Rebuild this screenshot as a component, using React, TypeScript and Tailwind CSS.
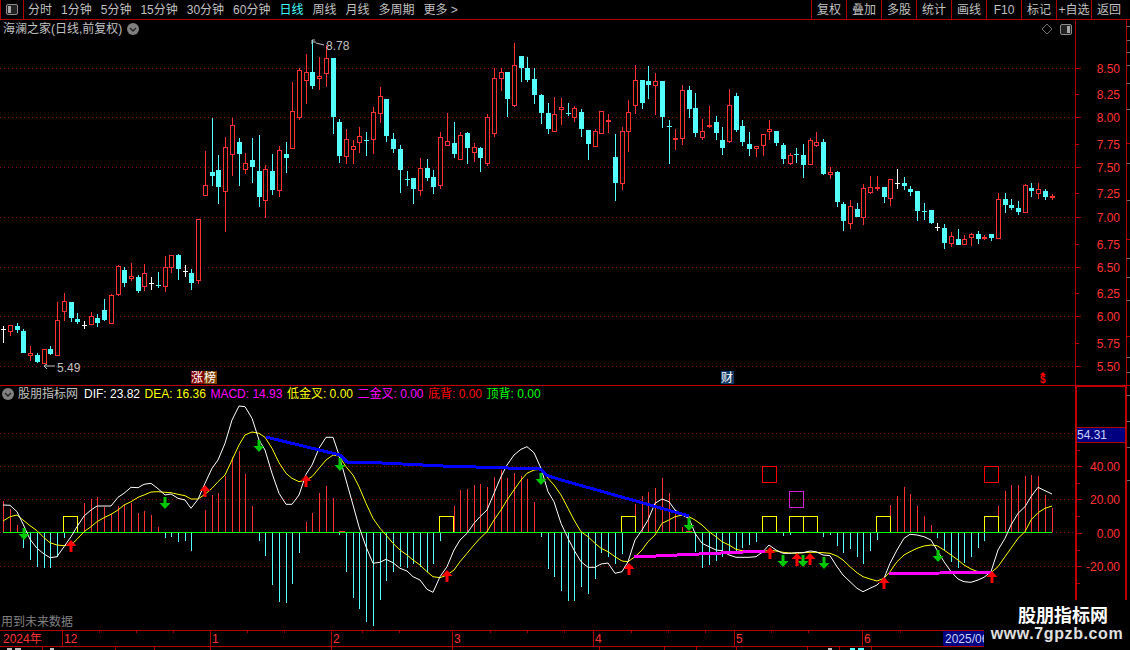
import React from "react";

type Kind = "R" | "C" | "W" | "X" | "F";
type Candle = [Kind, number, number, number, number];

const RED = "#ff3232";
const CYAN = "#54ffff";
const LINE = "#b00000";
const GRID = "#900c0c";

// kind, body top, body bottom, wick top, wick bottom (page pixels)
const candles: Candle[] = [
  ["W",329,329,326,343],["R",325,332,325,336],["C",326,330,323,333],["C",331,353,329,353],["R",353,356,346,361],
  ["C",355,362,353,363],["R",349,364,349,364],["C",349,354,346,355],["R",320,356,302,356],["R",301,312,293,321],
  ["C",302,318,302,322],["C",319,322,313,324],["W",325,325,321,329],["R",316,325,312,325],["C",318,323,314,327],
  ["C",310,320,299,321],["R",295,324,294,324],["R",266,295,265,296],["C",270,283,267,287],["R",276,279,263,281],
  ["C",277,291,275,293],["R",273,287,264,291],["W",283,283,277,290],["X",285,285,272,288],["R",267,287,256,292],
  ["R",255,268,255,273],["C",255,269,254,280],["W",271,271,265,277],["C",273,283,269,290],["R",219,281,219,284],
  ["R",185,196,151,196],["C",172,176,118,186],["C",170,187,155,204],["R",147,192,137,232],["R",125,155,118,176],
  ["C",142,154,138,186],["R",163,170,153,174],["C",160,167,138,183],["C",171,197,135,207],["R",169,201,165,218],
  ["C",171,190,154,195],["R",150,191,146,197],["C",154,158,142,173],["R",111,149,82,149],["R",70,118,68,120],
  ["R",72,81,54,104],["C",72,86,40,89],["R",76,79,57,90],["R",58,74,45,87],["C",58,117,58,134],
  ["C",122,156,119,163],["R",139,157,129,164],["R",146,150,140,164],["R",136,143,127,153],["X",140,140,132,156],
  ["R",112,140,107,154],["R",96,114,87,123],["C",99,136,99,142],["C",139,149,133,153],["C",149,170,145,193],
  ["X",179,179,171,186],["C",178,189,178,204],["R",168,191,158,196],["C",168,178,159,181],["C",177,187,170,194],
  ["R",137,186,132,189],["R",141,146,113,146],["C",143,154,122,158],["R",135,160,132,160],["C",133,148,132,164],
  ["R",147,153,143,162],["C",148,158,147,172],["R",117,164,114,166],["R",78,134,68,137],["R",72,79,68,91],
  ["C",72,99,72,117],["R",65,106,43,107],["C",56,68,56,82],["C",68,80,57,82],["C",79,95,68,104],
  ["C",95,113,94,124],["C",113,129,103,134],["R",114,132,97,132],["R",107,110,98,125],["X",113,113,103,116],
  ["R",108,118,106,122],["C",112,129,109,137],["C",130,144,130,160],["R",131,147,129,147],["R",111,134,111,134],
  ["F",121,121,114,133],["C",157,183,134,201],["R",131,184,127,190],["R",112,132,100,152],["R",80,106,65,114],
  ["C",80,103,80,109],["C",81,85,66,99],["R",81,86,73,115],["C",81,117,81,128],["X",126,126,120,164],
  ["F",139,139,129,150],["R",90,139,85,145],["C",90,109,86,118],["C",108,133,93,137],["R",131,138,119,140],
  ["F",126,126,106,128],["C",122,133,116,140],["C",140,148,127,155],["R",105,142,89,143],["C",96,130,93,132],
  ["C",126,142,120,146],["C",144,149,132,156],["R",146,149,146,157],["R",134,146,134,156],["R",129,132,120,140],
  ["C",131,143,131,146],["C",145,159,143,164],["R",155,164,153,165],["X",154,154,148,163],["C",155,165,144,178],
  ["R",140,165,138,165],["R",142,146,132,147],["C",142,174,139,175],["R",172,175,167,179],["C",172,202,171,207],
  ["C",204,221,202,231],["R",206,224,200,229],["C",209,217,203,217],["R",188,218,184,225],["R",187,193,176,194],
  ["F",188,188,176,191],["C",187,197,187,203],["R",179,199,179,206],["W",183,183,169,189],["C",183,186,177,190],
  ["C",189,192,186,196],["C",191,211,191,221],["X",211,211,203,220],["C",210,223,210,224],["W",227,227,223,231],
  ["C",228,243,224,249],["R",236,244,232,247],["C",239,245,229,245],["R",239,245,235,245],["R",234,238,233,246],
  ["C",234,239,231,244],["F",238,238,235,240],["C",234,238,234,241],["R",199,239,193,239],["C",199,205,193,213],
  ["C",205,208,199,210],["C",208,212,201,215],["R",185,213,184,213],["C",188,191,183,197],["R",189,194,183,199],
  ["C",191,197,189,200],["F",197,197,194,200],
];

// macd bar height above (+) or below (-) the zero line
const macd = [
  31,23,7,-15,-27,-34,-35,-35,-24,-5,0,0,29,33,35,25,18,26,27,29,19,21,17,5,-5,-4,-9,-8,-18,0,22,37,39,56,75,81,58,26,-8,-23,
  -52,-69,-70,-51,-20,10,19,39,46,34,-2,-39,-65,-76,-89,-93,-67,-48,-39,-34,-35,-31,-34,-39,-31,-8,0,26,42,43,47,48,45,55,62,54,59,56,53,30,
  -4,-36,-44,-58,-68,-68,-54,-61,-46,-20,-24,-31,-21,0,28,36,40,44,54,39,22,5,0,-19,-35,-32,-28,-24,-19,-20,-15,-12,-9,0,0,0,-3,-2,0,0,
  0,0,-4,-2,-13,-20,-16,-24,-31,-18,-7,0,27,36,45,38,26,16,7,-5,-18,-29,-35,-30,-24,-15,-8,0,26,41,47,47,56,57,56,37,24,
];

const difY = [
  375,376,395,432,478,505,522,533,530,500,470,440,408,390,378,378,378,352,340,322,323,313,310,326,345,342,355,360,385,358,
  310,265,240,190,120,78,80,115,180,210,280,340,373,373,345,283,255,205,172,172,225,300,375,440,500,550,547,538,548,565,
  573,590,600,628,637,590,560,510,480,460,430,410,390,340,290,255,225,208,200,218,265,335,365,430,
  475,510,545,562,562,552,549,580,575,545,480,450,420,370,357,365,390,405,415,460,490,500,510,512,525,532,532,532,530,515,
  495,510,520,520,518,518,513,515,525,527,560,585,605,625,635,625,615,595,550,510,475,463,465,470,480,510,545,575,597,605,
  607,600,592,575,510,475,435,400,380,350,322,332,342,
];

const deaY = [
  423,410,405,420,437,452,473,488,495,497,495,478,455,440,425,413,403,390,375,365,352,345,336,335,337,338,343,347,357,357,
  343,325,305,285,240,195,165,156,160,172,205,248,280,295,305,300,290,265,240,225,228,260,285,320,370,415,445,465,490,510,
  525,540,555,575,590,593,585,570,545,520,495,475,455,420,390,360,330,300,280,270,268,295,315,345,
  385,420,455,470,490,505,515,530,543,545,530,510,485,465,430,420,410,405,410,420,435,455,470,485,495,508,512,512,515,515,
  510,513,517,519,520,518,517,517,518,520,528,540,560,578,590,597,603,595,575,545,525,515,505,498,495,497,510,525,540,555,
  567,575,578,578,560,530,505,475,455,420,398,385,378,
];

const candleX = (i: number) => Math.round(3.3 + 6.72 * i);
const toPoints = (ys: number[]) =>
  ys.map((v, i) => `${candleX(i)},${(380 + v / 3).toFixed(1)}`).join(" ");

const greenArrows = [
  [24,528,540],[165,497,509],[259,440,452],[340,458,471],[541,473,485],
  [689,518,531],[783,555,567],[803,555,567],[824,557,569],[938,550,562],
];
const redArrows = [
  [71,540,552],[205,485,497],[306,475,487],[447,570,582],[629,563,575],
  [770,547,559],[797,553,566],[810,553,565],[884,577,589],[992,571,583],
];
const yellowBoxes = [63, 439, 621, 762, 789, 803, 876, 984];

const tabs = ["分时", "1分钟", "5分钟", "15分钟", "30分钟", "60分钟", "日线", "周线", "月线", "多周期", "更多 >"];
const actions = ["复权", "叠加", "多股", "统计", "画线", "F10", "标记", "+自选", "返回"];

function CandleMark({ c, i }: { c: Candle; i: number }) {
  const [kind, top, bot, wt, wb] = c;
  const x = candleX(i);
  const color = kind === "C" || kind === "X" ? CYAN : kind === "W" ? "#ffffff" : RED;
  return (
    <g>
      <rect x={x} y={wt} width={1} height={wb - wt} fill={color} />
      {kind === "C" && <rect x={x - 2} y={top} width={5} height={bot - top} fill={color} />}
      {kind === "R" && (
        <rect x={x - 1.5} y={top + 0.5} width={4} height={bot - top - 1} fill="#000" stroke={color} />
      )}
      {(kind === "W" || kind === "X") && <rect x={x - 2} y={top} width={5} height={1} fill={color} />}
      {kind === "F" && <rect x={x - 2} y={top - 1} width={5} height={2} fill={color} />}
    </g>
  );
}

function Chevron() {
  return (
    <svg width="12" height="12" viewBox="0 0 12 12" className="shrink-0">
      <circle cx="6" cy="6" r="6" fill="#808080" />
      <path d="M3 5l3 3 3-3" fill="none" stroke="#222" strokeWidth="1.4" />
    </svg>
  );
}

function PanelIcon({ lit }: { lit: "left" | "right" }) {
  return (
    <svg width="12" height="11" viewBox="0 0 12 11" className="shrink-0">
      <rect x="0.5" y="0.5" width="11" height="10" rx="1.5" fill="#222" stroke="#8c8c8c" />
      <rect x={lit === "left" ? 2 : 7} y="2" width="3" height="7" fill="#a8a8a8" />
    </svg>
  );
}

function TopBar() {
  return (
    <div className="flex h-5 shrink-0 items-center border-b border-[#b00000] text-[12px] leading-[14px] text-[#c0c0c0]">
      <div className="flex h-full w-6 items-center justify-center border-x border-[#b00000]">
        <PanelIcon lit="left" />
      </div>
      <div className="ml-1 flex gap-[9px]">
        {tabs.map((t) => (
          <span key={t} className={t === "日线" ? "text-[#40ffff]" : ""}>
            {t}
          </span>
        ))}
      </div>
      <div className="mr-[4px] ml-auto flex h-full">
        {actions.map((a) => (
          <div key={a} className="flex w-[35px] items-center justify-center border-l border-[#b00000]">
            {a}
          </div>
        ))}
      </div>
    </div>
  );
}

function PriceChart() {
  const gridY = [68, 117, 167, 217, 267, 316, 366];
  return (
    <svg width="1075" height="365" viewBox="0 20 1075 365" className="absolute inset-0">
      {gridY.map((y) => (
        <line key={y} x1="0" x2="1075" y1={y + 0.5} y2={y + 0.5} stroke={GRID} strokeDasharray="1 3" />
      ))}
      <g shapeRendering="crispEdges">
        {candles.map((c, i) => (
          <CandleMark key={i} c={c} i={i} />
        ))}
      </g>
      {/* high and low notes */}
      <path d="M315 40h-3v4M313 42h3M316 43l8 2" fill="none" stroke="#c0c0c0" />
      <text x="326" y="50" fill="#c0c0c0" className="text-[12px]">8.78</text>
      <path d="M44 366h11M44 366l3-2M44 366l3 3" fill="none" stroke="#c0c0c0" />
      <text x="57" y="372" fill="#c0c0c0" className="text-[12px]">5.49</text>
      {/* markers along the bottom */}
      <rect x="191" y="371" width="13" height="13" fill="#800000" />
      <rect x="204" y="371" width="13" height="13" fill="#804000" />
      <text x="191" y="382" fill="#fff" className="text-[12px]">涨</text>
      <text x="204" y="382" fill="#fff" className="text-[12px]">榜</text>
      <rect x="721" y="371" width="13" height="13" fill="#103868" />
      <text x="721" y="382" fill="#fff" className="text-[12px]">财</text>
      <path d="M1043 372l3 3h-6z" fill="#ff0000" />
      <text x="1040" y="383" fill="#ff0000" className="text-[10px] font-bold">$</text>
      {/* corner tools */}
      <path d="M1047 24l5 5-5 5-5-5z" fill="none" stroke="#707070" />
    </svg>
  );
}

function PriceAxis() {
  const labels = ["8.50", "8.25", "8.00", "7.75", "7.50", "7.25", "7.00", "6.75", "6.50", "6.25", "6.00", "5.75", "5.50"];
  const ys = [68, 94, 117, 144, 167, 193, 217, 244, 267, 293, 316, 343, 366];
  return (
    <svg width="50" height="365" viewBox="1076 20 50 365">
      {labels.map((t, i) => (
        <g key={t}>
          <rect x="1076" y={ys[i]} width={i % 2 === 0 ? 5 : 3} height="1" fill={LINE} />
          <text x="1120" y={ys[i] + 5} textAnchor="end" fill={RED} className="text-[12px]">
            {t}
          </text>
        </g>
      ))}
    </svg>
  );
}

function MacdChart() {
  const gridY = [433, 466, 499, 532, 566];
  return (
    <svg width="1075" height="244" viewBox="0 386 1075 244" className="absolute inset-0">
      {gridY.map((y) => (
        <line key={y} x1="0" x2="1075" y1={y + 0.5} y2={y + 0.5} stroke={GRID} strokeDasharray="1 3" />
      ))}
      <g shapeRendering="crispEdges">
        {macd.map((h, i) =>
          h === 0 ? null : (
            <rect
              key={i}
              x={candleX(i)}
              y={h > 0 ? 532 - h : 533}
              width="1"
              height={Math.abs(h)}
              fill={h > 0 ? RED : CYAN}
            />
          ),
        )}
        <rect x="339" y="531" width="6" height="1" fill={RED} />
        <rect x="686" y="531" width="6" height="1" fill={RED} />
        <rect x="3" y="532" width="1049" height="1" fill="#00ff00" />
        {yellowBoxes.map((x) => (
          <path key={x} d={`M${x + 0.5} 532V516.500H${x + 14.5}V532`} fill="none" stroke="#ffff00" />
        ))}
        <rect x="762.500" y="466.500" width="14" height="16" fill="none" stroke="#ff0000" />
        <rect x="984.500" y="466.500" width="14" height="16" fill="none" stroke="#ff0000" />
        <rect x="789.500" y="491.500" width="14" height="16" fill="none" stroke="#d020d0" />
      </g>
      <polyline points={toPoints(deaY)} fill="none" stroke="#ffff00" />
      <polyline points={toPoints(difY)} fill="none" stroke="#ffffff" />
      <g shapeRendering="crispEdges" fill="none" strokeWidth="3">
        <polyline
          points="266,437 340,455 347,462 382,463 443,466 540,469 548,476 565,481 689,516"
          stroke="#0000ff"
        />
        <polyline points="634,557 765,551" stroke="#ff00ff" />
        <polyline points="889,574 991,572" stroke="#ff00ff" />
      </g>
      {greenArrows.map(([x, top, tip]) => (
        <path
          key={`g${x}`}
          d={`M${x - 1.5} ${top}h3V${tip - 6}h4L${x} ${tip}L${x - 5.5} ${tip - 6}h4z`}
          fill="#00c800"
        />
      ))}
      {redArrows.map(([x, tip, end]) => (
        <path
          key={`r${x}`}
          d={`M${x - 1.5} ${end}h3V${tip + 6}h4L${x} ${tip}L${x - 5.5} ${tip + 6}h4z`}
          fill="#ff0000"
        />
      ))}
    </svg>
  );
}

function MacdAxis() {
  const labels: [string, number][] = [["40.00", 466], ["20.00", 499], ["0.00", 533], ["-20.00", 566]];
  const minor = [450, 483, 516, 550, 583];
  return (
    <svg width="49" height="244" viewBox="1077 386 49 244">
      <rect x="1077" y="386" width="49" height="1" fill="#c00000" />
      <rect x="1125" y="386" width="1" height="244" fill="#c00000" />
      {labels.map(([t, y]) => (
        <g key={t}>
          <rect x="1077" y={y} width="5" height="1" fill={LINE} />
          <text x="1120" y={y + 5} textAnchor="end" fill={RED} className="text-[12px]">
            {t}
          </text>
        </g>
      ))}
      {minor.map((y) => (
        <rect key={y} x="1077" y={y} width="3" height="1" fill={LINE} />
      ))}
      <rect x="1077" y="427" width="48" height="16" fill="#000080" />
      <rect x="1077" y="427" width="48" height="1" fill={LINE} />
      <rect x="1077" y="442" width="48" height="1" fill={LINE} />
      <text x="1077" y="439" fill="#c8d4ff" className="text-[12px]">54.31</text>
    </svg>
  );
}

function ScrollStrip() {
  const ticks = [26, 40, 52, 65, 83, 109, 163, 200, 258, 277, 300, 357, 372, 395, 421, 447, 480];
  const marks = [143, 239, 336];
  return (
    <svg width="4" height="630" viewBox="0 0 4 630" className="absolute top-0 right-0">
      <rect x="0" y="20" width="1" height="610" fill={LINE} />
      {ticks.map((y) => (
        <rect key={y} x="1" y={y} width="3" height="1" fill="#707070" />
      ))}
      {marks.map((y) => (
        <rect key={y} x="1" y={y} width="3" height="1" fill={LINE} />
      ))}
    </svg>
  );
}

function TimeAxis() {
  const majors = [62, 210, 331, 452, 593, 734, 862];
  const minors = [99, 136, 173, 247, 284, 362, 399, 490, 527, 564, 631, 668, 705, 771, 808, 900];
  const months: [string, number][] = [["12", 64], ["1", 212], ["2", 333], ["3", 454], ["4", 595], ["5", 736], ["6", 864]];
  return (
    <div className="h-[17px] shrink-0 border-y border-[#b00000]">
      <svg width="1130" height="15" viewBox="0 631 1130 15">
        {majors.map((x) => (
          <rect key={x} x={x} y="631" width="1" height="15" fill={LINE} />
        ))}
        {minors.map((x) => (
          <rect key={x} x={x} y="631" width="1" height="2" fill={LINE} />
        ))}
        <text x="3" y="643" fill={RED} className="text-[12px]">2024年</text>
        {months.map(([t, x]) => (
          <text key={t} x={x} y="643" fill={RED} className="text-[12px]">
            {t}
          </text>
        ))}
        <rect x="943" y="631" width="44" height="15" fill="#000080" />
        <text x="945" y="643" fill="#c8d4ff" className="text-[12px]">2025/06</text>
      </svg>
    </div>
  );
}

// top edge of the next row, cut off by the window
function BottomStrip() {
  const ticks = [42, 115, 154, 210, 331, 452, 599, 664, 696, 736, 807, 839, 871];
  return (
    <svg width="984" height="3" viewBox="0 647 984 3" className="shrink-0">
      {ticks.map((x) => (
        <rect key={x} x={x} y="647" width="1" height="3" fill={LINE} />
      ))}
      <rect x="7" y="648" width="5" height="2" fill="#c0c0c0" />
      <rect x="15" y="648" width="6" height="2" fill="#c0c0c0" />
      <rect x="50" y="648" width="4" height="2" fill="#c0c0c0" />
      <rect x="828" y="648" width="4" height="2" fill="#c0c0c0" />
      <rect x="850" y="648" width="5" height="2" fill={CYAN} />
      <rect x="858" y="648" width="6" height="2" fill={CYAN} />
    </svg>
  );
}

export default function App() {
  return (
    <div className="relative flex h-[650px] w-[1130px] flex-col overflow-hidden bg-black font-['Liberation_Sans','Noto_Sans_CJK_SC',sans-serif]">
      <TopBar />

      {/* price panel */}
      <div className="flex h-[365px] shrink-0">
        <div className="relative w-[1075px] shrink-0">
          <PriceChart />
          <div className="absolute top-[2px] left-[3px] flex items-center gap-[5px] text-[12px] leading-[14px] text-[#c0c0c0]">
            <span>海澜之家(日线,前复权)</span>
            <Chevron />
          </div>
          <div className="absolute top-[4px] right-[3px]">
            <PanelIcon lit="right" />
          </div>
        </div>
        <div className="border-l border-[#b00000]">
          <PriceAxis />
        </div>
      </div>

      {/* macd panel */}
      <div className="flex h-[245px] shrink-0 border-t border-[#c00000]">
        <div className="relative w-[1075px] shrink-0">
          <MacdChart />
          <div className="absolute top-[1px] left-[2px] flex items-center gap-[4.5px] text-[12px] leading-[14px] whitespace-nowrap">
            <div className="mr-[1.5px] flex items-center gap-[4px] text-[#c0c0c0]">
              <Chevron />
              <span>股朋指标网</span>
            </div>
            <span className="text-white">DIF: 23.82</span>
            <span className="text-[#ffff00]">DEA: 16.36</span>
            <span className="text-[#ff00ff]">MACD: 14.93</span>
            <span className="text-[#ffff00]">低金叉: 0.00</span>
            <span className="text-[#ff00ff]">二金叉: 0.00</span>
            <span className="text-[#ff0000]">底背: 0.00</span>
            <span className="text-[#00ff00]">顶背: 0.00</span>
          </div>
          <div className="absolute bottom-[1px] left-[1px] text-[12px] leading-[14px] text-[#808080]">用到未来数据</div>
        </div>
        <div className="border-l-2 border-[#c00000]">
          <MacdAxis />
        </div>
      </div>

      <TimeAxis />
      <BottomStrip />
      <ScrollStrip />

      <div className="absolute right-0 bottom-0 flex h-[50px] w-[146px] flex-col items-center bg-black pt-[6px]">
        <span className="pl-[12px] text-[18px] leading-[20px] font-bold text-white">股朋指标网</span>
        <span className="-mt-[1px] text-[16px] leading-[18px] font-bold tracking-[0.6px] text-[#e0e0e0]">www.7gpzb.com</span>
      </div>
    </div>
  );
}
